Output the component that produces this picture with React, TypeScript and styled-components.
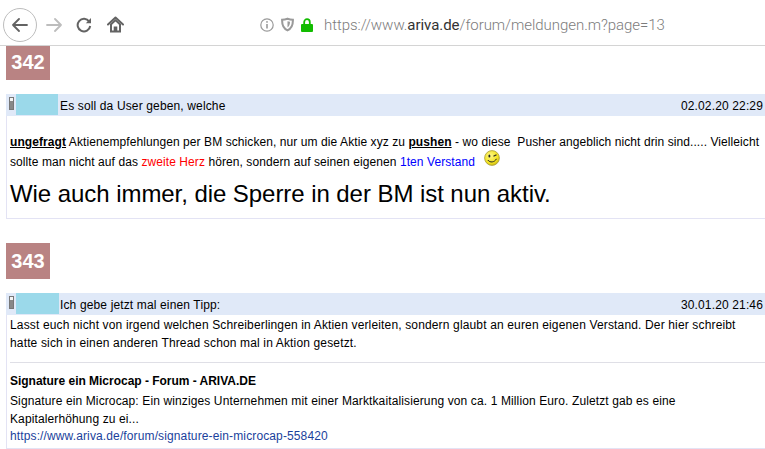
import React from "react";
import styled, { createGlobalStyle } from "styled-components";

const Global = createGlobalStyle`
  html, body { margin: 0; padding: 0; background: #fff; overflow: hidden; }
  body { width: 765px; height: 449px; font-family: "Liberation Sans", Arial, sans-serif; font-size: 12px; color: #000; }
`;

const Toolbar = styled.header`
  display: flex; align-items: center; height: 41px;
  border-bottom: 1px solid #d4d4d4; padding: 4px 0 0 3px;
`;
const BackCircle = styled.div`
  width: 32px; height: 32px; border: 1px solid #bdbdbd; border-radius: 50%;
  display: flex; align-items: center; justify-content: center; color: #636363; flex: none;
`;
const NavIcon = styled.div<{ $w: number; $color?: string }>`
  width: ${p => p.$w}px; display: flex; justify-content: center; color: ${p => p.$color || "#636363"}; flex: none;
`;
const UrlIcons = styled.div`
  display: flex; align-items: center; gap: 7px; margin-left: 127px; color: #9a9a9a;
`;
const Url = styled.div`
  font-family: Roboto, sans-serif; font-size: 15px; font-weight: 300; color: #7c7c7c; margin-left: 11px; white-space: nowrap; letter-spacing: -.05px;
`;
const Domain = styled.span`color: #333; font-weight: 400;`;

const Page = styled.main`display: flex; flex-direction: column;`;
const Badge = styled.div<{ $h: number; $top?: number; $pb?: number }>`
  width: 44px; height: ${p => p.$h}px; margin: ${p => p.$top || 0}px 0 0 6px; padding-bottom: ${p => p.$pb || 0}px; box-sizing: border-box;
  background: #b98383; color: #fff;
  font-weight: 700; font-size: 20px; display: flex; align-items: center; justify-content: center;
`;
const Post = styled.article`
  margin: 14px 0 0 6px; border-left: 1px solid #e3e3f4; border-bottom: 1px solid #e3e3f4;
`;
const PostHead = styled.div`
  height: 22px; margin-left: -1px; background: #e0e9f8; display: flex; align-items: flex-start; font-size: 12px; line-height: 24px; letter-spacing: .14px;
`;
const Grip = styled.span`
  width: 5px; height: 13px; margin: 3px 0 0 3px; background: linear-gradient(#f4f4f4 0 3px, #888 3px); border: 1px solid #777; box-sizing: border-box; flex: none;
`;
const Avatar = styled.span<{ $w: number; $gap: number }>`
  width: ${p => p.$w}px; height: 21px; margin: 0 ${p => p.$gap}px 0 2px; background: #9bd9ea; flex: none;
`;
const Stamp = styled.span`margin-left: auto; margin-right: 2px; white-space: nowrap;`;
const Title = styled.span`white-space: nowrap;`;
const Body = styled.div<{ $h: number }>`
  padding: 0 0 0 3px; height: ${p => p.$h}px; box-sizing: border-box; letter-spacing: .08px;
`;
const Paragraph = styled.p<{ $top?: number; $lh?: number; $w?: number; $ls?: number }>`
  margin: 0; padding-top: ${p => p.$top || 0}px; width: ${p => p.$w || 752}px; line-height: ${p => p.$lh || 18}px;
  ${p => (p.$ls ? `letter-spacing: ${p.$ls}px;` : "")}
`;
const Strong = styled.strong`text-decoration: underline;`;
const Red = styled.span`color: #f00;`;
const Blue = styled.span`color: #00f;`;
const Smiley = styled.span`
  display: inline-block; width: 16px; height: 16px; margin: -6px 0 0 6px; vertical-align: 0;
  svg { display: block; }
`;
const Big = styled.div`font-size: 24px; line-height: 28px; margin-top: 8px; letter-spacing: -.06px;`;
const Rule = styled.hr`border: 0; border-top: 1px solid #dfdfe6; margin: 10px 0 0 0;`;
const LinkTitle = styled.div`font-weight: 700; line-height: 18px; margin-top: 9px; letter-spacing: -.02px;`;
const LinkUrl = styled.a`color: #1a3f9c; text-decoration: none; display: block; line-height: 18px; letter-spacing: .125px; margin-top: -1px;`;

const Back = () => (
  <svg width="16" height="14" viewBox="0 0 16 14" fill="none" stroke="currentColor" strokeWidth="1.800" strokeLinecap="round" strokeLinejoin="round">
    <path d="M1 7H15M7 1 1 7 7 13" />
  </svg>
);
const Forward = () => (
  <svg width="16" height="14" viewBox="0 0 16 14" fill="none" stroke="currentColor" strokeWidth="1.800" strokeLinecap="round" strokeLinejoin="round">
    <path d="M15 7H1M9 1 15 7 9 13" />
  </svg>
);
const Reload = () => (
  <svg width="16" height="16" viewBox="0 0 16 16" fill="none" stroke="currentColor" strokeWidth="2">
    <path d="M13.2 4.6A6.3 6.3 0 1 0 14.2 9" />
    <path d="M15 1v5.2H9.8z" fill="currentColor" stroke="none" />
  </svg>
);
const Home = () => (
  <svg width="17" height="17" viewBox="0 0 17 17">
    <path d="M1 8.500 8.500 1.500 16 8.500" fill="none" stroke="currentColor" strokeWidth="2" strokeLinejoin="round" strokeLinecap="round" />
    <path d="M3 8 8.500 3 14 8v8.500H3Z" fill="currentColor" />
    <path d="M5 8.800 8.500 5.600 12 8.800V14.500H10.300V10.500H6.700V14.500H5Z" fill="#fff" />
  </svg>
);
const Info = () => (
  <svg width="14" height="14" viewBox="0 0 14 14" fill="none" stroke="currentColor" strokeWidth="1.2">
    <circle cx="7" cy="7" r="6.2" />
    <path d="M7 6v4.5" strokeWidth="1.6" />
    <circle cx="7" cy="3.9" r=".9" fill="currentColor" stroke="none" />
  </svg>
);
const Shield = () => (
  <svg width="13" height="15" viewBox="0 0 14 15" fill="none" stroke="currentColor" strokeWidth="2.200">
    <path d="M1.200 2.400C3 2.200 5 1.800 7 1.200c2 .6 4 1 5.800 1.200C13 8 11.500 12 7 13.800 2.500 12 1 8 1.200 2.400Z" />
    <path d="M7 4c1 .3 1.800.4 2.700.5C9.600 7.500 8.800 9.500 7 10.800Z" fill="currentColor" stroke="none" />
  </svg>
);
const Lock = () => (
  <svg width="12" height="14" viewBox="0 0 12 14">
    <path d="M3.200 6.500V4a2.800 2.800 0 0 1 5.600 0v2.500" fill="none" stroke="#12bc00" strokeWidth="1.800" />
    <rect x="0" y="6" width="12" height="8" rx="1" fill="#12bc00" />
  </svg>
);
const Wink = () => (
  <svg width="16" height="16" viewBox="0 0 16 16">
    <defs>
      <radialGradient id="sm" cx=".4" cy=".35" r=".7">
        <stop offset="0" stopColor="#fdf78a" />
        <stop offset=".7" stopColor="#f2e21e" />
        <stop offset="1" stopColor="#c7b414" />
      </radialGradient>
    </defs>
    <circle cx="8" cy="8" r="7.400" fill="url(#sm)" stroke="#a89c3c" strokeWidth=".8" />
    <ellipse cx="5.400" cy="6" rx="1" ry="1.500" fill="#222" />
    <path d="M9.500 6.300 12.500 4.800" stroke="#222" strokeWidth="1.100" fill="none" />
    <path d="M3.800 10C6 13 10.500 12.500 12.500 8.800" stroke="#222" strokeWidth="1" fill="none" />
  </svg>
);

export default function App() {
  return (
    <>
      <Global />
      <Toolbar>
        <BackCircle><Back /></BackCircle>
        <NavIcon $w={33} $color="#bdbdbd"><Forward /></NavIcon>
        <NavIcon $w={28}><Reload /></NavIcon>
        <NavIcon $w={35}><Home /></NavIcon>
        <UrlIcons>
          <Info />
          <Shield />
          <Lock />
        </UrlIcons>
        <Url>https://www.<Domain>ariva.de</Domain>/forum/meldungen.m?page=13</Url>
      </Toolbar>
      <Page>
        <Badge $h={34} $pb={1}>342</Badge>
        <Post>
          <PostHead>
            <Grip />
            <Avatar $w={42} $gap={2} />
            <Title>Es soll da User geben, welche</Title>
            <Stamp>02.02.20 22:29</Stamp>
          </PostHead>
          <Body $h={102}>
            <Paragraph $top={16} $lh={20}>
              <Strong>ungefragt</Strong> Aktienempfehlungen per BM schicken, nur um die Aktie xyz zu <Strong>pushen</Strong> - wo diese&nbsp; Pusher angeblich nicht drin sind..... Vielleicht sollte man nicht auf das <Red>zweite Herz</Red> hören, sondern auf seinen eigenen <Blue>1ten Verstand</Blue> <Smiley><Wink /></Smiley>
            </Paragraph>
            <Big>Wie auch immer, die Sperre in der BM ist nun aktiv.</Big>
          </Body>
        </Post>
        <Badge $h={36} $top={24}>343</Badge>
        <Post>
          <PostHead>
            <Grip />
            <Avatar $w={43} $gap={1} />
            <Title>Ich gebe jetzt mal einen Tipp:</Title>
            <Stamp>30.01.20 21:46</Stamp>
          </PostHead>
          <Body $h={133}>
            <Paragraph $top={1} $w={740} $ls={0.15}>
              Lasst euch nicht von irgend welchen Schreiberlingen in Aktien verleiten, sondern glaubt an euren eigenen Verstand. Der hier schreibt hatte sich in einen anderen Thread schon mal in Aktion gesetzt.
            </Paragraph>
            <Rule />
            <LinkTitle>Signature ein Microcap - Forum - ARIVA.DE</LinkTitle>
            <Paragraph $top={2} $ls={0.12}>
              Signature ein Microcap: Ein winziges Unternehmen mit einer Marktkaitalisierung von ca. 1 Million Euro. Zuletzt gab es eine Kapitalerhöhung zu ei...
            </Paragraph>
            <LinkUrl>https://www.ariva.de/forum/signature-ein-microcap-558420</LinkUrl>
          </Body>
        </Post>
      </Page>
    </>
  );
}
